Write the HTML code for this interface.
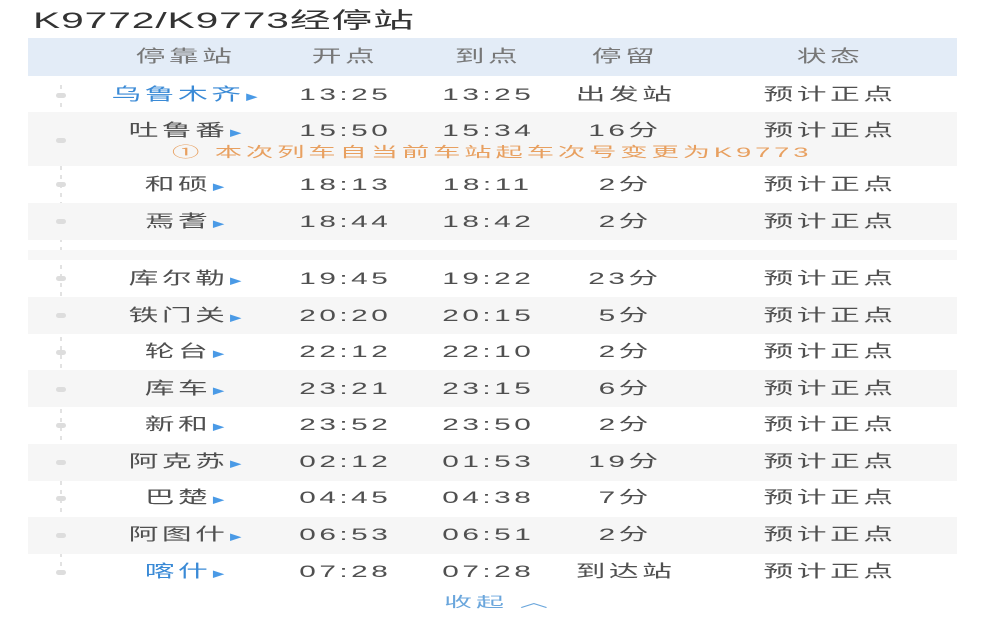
<!DOCTYPE html>
<html><head><meta charset="utf-8"><style>
body{margin:0;width:985px;height:617px;background:#fff;overflow:hidden;position:relative;font-family:"Liberation Sans","Noto Sans CJK SC",sans-serif;}
.title{position:absolute;left:33px;top:3px;font-size:22px;color:#333;transform:scaleX(1.85);transform-origin:left center;letter-spacing:0.5px;}
.row{position:absolute;left:28px;width:929px;}
.g{background:#f6f6f6;}
.hd{background:#e3ecf7;color:#666;}
.c{position:absolute;top:0;height:37px;line-height:37px;text-align:center;width:200px;margin-left:-100px;font-size:17px;color:#505050;}
.c span{display:inline-block;transform:scaleX(1.75);letter-spacing:2px;}
.hd .c{height:38px;line-height:38px;font-size:17px;color:#777;}
.blue{color:#3a8ad6 !important;}
.tri{color:#4a9ae6;font-size:8px;letter-spacing:0;}
.note{position:absolute;left:0;width:929px;top:30px;text-align:center;font-size:14px;color:#e8a060;}
.note span{display:inline-block;transform:scaleX(1.95);letter-spacing:2px;}
.dot{position:absolute;left:56px;width:10px;height:5px;border-radius:3px;background:#ddd;}
.line{position:absolute;left:60px;top:85px;width:2px;height:490px;background:repeating-linear-gradient(#e2e2e2 0 4px,transparent 4px 9px);}
.foot{position:absolute;top:592px;left:0;width:985px;text-align:center;font-size:14px;color:#6aa6dc;}
.foot span{display:inline-block;transform:scaleX(2);letter-spacing:2px;margin-left:10px;}
</style></head><body>
<div class="title">K9772/K9773经停站</div>
<div class="row hd" style="top:38px;height:38px;">
<div class="c" style="left:157px"><span>停靠站</span></div>
<div class="c" style="left:317px"><span>开点</span></div>
<div class="c" style="left:460px"><span>到点</span></div>
<div class="c" style="left:597px"><span>停留</span></div>
<div class="c" style="left:802px"><span>状态</span></div>
</div>
<div class="line"></div>
<div class="row g" style="top:112px;height:54px"></div>
<div class="row g" style="top:203px;height:37px"></div>
<div class="row g" style="top:250px;height:10px;background:#f7f7f7"></div>
<div class="row g" style="top:297px;height:37px"></div>
<div class="row g" style="top:370px;height:37px"></div>
<div class="row g" style="top:444px;height:37px"></div>
<div class="row g" style="top:517px;height:37px"></div>

<div class="row" style="top:76px;height:37px">
<div class="c blue" style="left:157px"><span>乌鲁木齐<b class="tri">▶</b></span></div>
<div class="c" style="left:317px"><span>13:25</span></div><div class="c" style="left:460px"><span>13:25</span></div><div class="c" style="left:597px"><span>出发站</span></div><div class="c" style="left:802px"><span>预计正点</span></div></div>
<div class="row" style="top:112px;height:37px">
<div class="c" style="left:157px"><span>吐鲁番<b class="tri">▶</b></span></div>
<div class="c" style="left:317px"><span>15:50</span></div><div class="c" style="left:460px"><span>15:34</span></div><div class="c" style="left:597px"><span>16分</span></div><div class="c" style="left:802px"><span>预计正点</span></div>
<div class="note"><span>① 本次列车自当前车站起车次号变更为K9773</span></div></div>
<div class="row" style="top:166px;height:37px">
<div class="c" style="left:157px"><span>和硕<b class="tri">▶</b></span></div>
<div class="c" style="left:317px"><span>18:13</span></div><div class="c" style="left:460px"><span>18:11</span></div><div class="c" style="left:597px"><span>2分</span></div><div class="c" style="left:802px"><span>预计正点</span></div></div>
<div class="row" style="top:203px;height:37px">
<div class="c" style="left:157px"><span>焉耆<b class="tri">▶</b></span></div>
<div class="c" style="left:317px"><span>18:44</span></div><div class="c" style="left:460px"><span>18:42</span></div><div class="c" style="left:597px"><span>2分</span></div><div class="c" style="left:802px"><span>预计正点</span></div></div>
<div class="row" style="top:260px;height:37px">
<div class="c" style="left:157px"><span>库尔勒<b class="tri">▶</b></span></div>
<div class="c" style="left:317px"><span>19:45</span></div><div class="c" style="left:460px"><span>19:22</span></div><div class="c" style="left:597px"><span>23分</span></div><div class="c" style="left:802px"><span>预计正点</span></div></div>
<div class="row" style="top:297px;height:37px">
<div class="c" style="left:157px"><span>铁门关<b class="tri">▶</b></span></div>
<div class="c" style="left:317px"><span>20:20</span></div><div class="c" style="left:460px"><span>20:15</span></div><div class="c" style="left:597px"><span>5分</span></div><div class="c" style="left:802px"><span>预计正点</span></div></div>
<div class="row" style="top:333px;height:37px">
<div class="c" style="left:157px"><span>轮台<b class="tri">▶</b></span></div>
<div class="c" style="left:317px"><span>22:12</span></div><div class="c" style="left:460px"><span>22:10</span></div><div class="c" style="left:597px"><span>2分</span></div><div class="c" style="left:802px"><span>预计正点</span></div></div>
<div class="row" style="top:370px;height:37px">
<div class="c" style="left:157px"><span>库车<b class="tri">▶</b></span></div>
<div class="c" style="left:317px"><span>23:21</span></div><div class="c" style="left:460px"><span>23:15</span></div><div class="c" style="left:597px"><span>6分</span></div><div class="c" style="left:802px"><span>预计正点</span></div></div>
<div class="row" style="top:406px;height:37px">
<div class="c" style="left:157px"><span>新和<b class="tri">▶</b></span></div>
<div class="c" style="left:317px"><span>23:52</span></div><div class="c" style="left:460px"><span>23:50</span></div><div class="c" style="left:597px"><span>2分</span></div><div class="c" style="left:802px"><span>预计正点</span></div></div>
<div class="row" style="top:443px;height:37px">
<div class="c" style="left:157px"><span>阿克苏<b class="tri">▶</b></span></div>
<div class="c" style="left:317px"><span>02:12</span></div><div class="c" style="left:460px"><span>01:53</span></div><div class="c" style="left:597px"><span>19分</span></div><div class="c" style="left:802px"><span>预计正点</span></div></div>
<div class="row" style="top:479px;height:37px">
<div class="c" style="left:157px"><span>巴楚<b class="tri">▶</b></span></div>
<div class="c" style="left:317px"><span>04:45</span></div><div class="c" style="left:460px"><span>04:38</span></div><div class="c" style="left:597px"><span>7分</span></div><div class="c" style="left:802px"><span>预计正点</span></div></div>
<div class="row" style="top:516px;height:37px">
<div class="c" style="left:157px"><span>阿图什<b class="tri">▶</b></span></div>
<div class="c" style="left:317px"><span>06:53</span></div><div class="c" style="left:460px"><span>06:51</span></div><div class="c" style="left:597px"><span>2分</span></div><div class="c" style="left:802px"><span>预计正点</span></div></div>
<div class="row" style="top:553px;height:37px">
<div class="c blue" style="left:157px"><span>喀什<b class="tri">▶</b></span></div>
<div class="c" style="left:317px"><span>07:28</span></div><div class="c" style="left:460px"><span>07:28</span></div><div class="c" style="left:597px"><span>到达站</span></div><div class="c" style="left:802px"><span>预计正点</span></div></div>

<div class="dot" style="top:93px"></div><div class="dot" style="top:138px"></div><div class="dot" style="top:182px"></div><div class="dot" style="top:219px"></div><div class="dot" style="top:276px"></div><div class="dot" style="top:313px"></div><div class="dot" style="top:350px"></div><div class="dot" style="top:387px"></div><div class="dot" style="top:423px"></div><div class="dot" style="top:460px"></div><div class="dot" style="top:496px"></div><div class="dot" style="top:533px"></div><div class="dot" style="top:570px"></div>
<div class="foot"><span>收起 ︿</span></div>
</body></html>
